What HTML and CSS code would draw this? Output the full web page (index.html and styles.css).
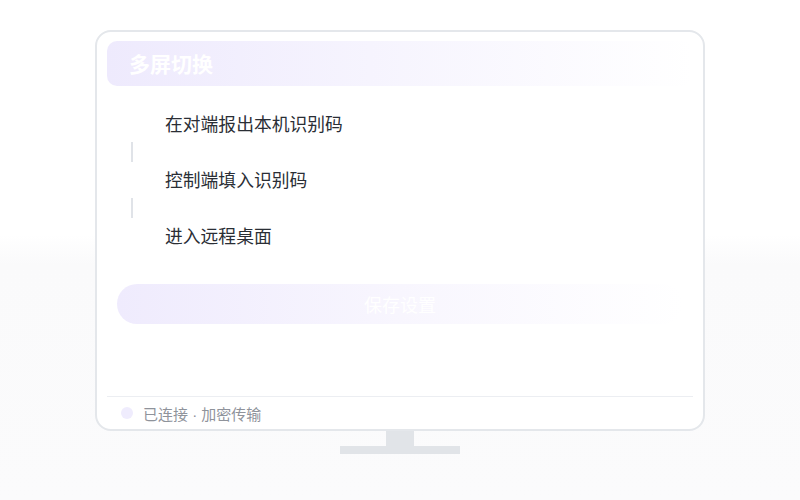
FILE: index.html
```html
<!DOCTYPE html>
<html lang="zh">
<head>
<meta charset="utf-8">
<title>多屏切换</title>
<link rel="stylesheet" href="styles.css">
</head>
<body>
<div class="stage">
  <div class="monitor">
    <div class="screen">
      <div class="header">
        <span class="title">多屏切换</span>
      </div>
      <ol class="steps">
        <li class="step"><span class="marker"></span><span class="label">在对端报出本机识别码</span></li>
        <li class="connector"></li>
        <li class="step"><span class="marker"></span><span class="label">控制端填入识别码</span></li>
        <li class="connector"></li>
        <li class="step"><span class="marker"></span><span class="label">进入远程桌面</span></li>
      </ol>
      <button class="save">保存设置</button>
      <div class="spacer"></div>
      <div class="footer">
        <span class="dot"></span>
        <span class="status">已连接 · 加密传输</span>
      </div>
    </div>
    <div class="neck"></div>
    <div class="base"></div>
  </div>
</div>
</body>
</html>
```
FILE: styles.css
```css
html, body {
  margin: 0;
  padding: 0;
}
body {
  width: 800px;
  height: 500px;
  overflow: hidden;
  background: linear-gradient(180deg, #ffffff 0%, #ffffff 47%, #fafafb 53%, #fbfbfc 100%);
  font-family: "Noto Sans CJK SC", "Noto Sans", sans-serif;
}
.stage {
  display: flex;
  justify-content: center;
  padding-top: 30px;
}
.monitor {
  display: flex;
  flex-direction: column;
  align-items: center;
}
.screen {
  box-sizing: border-box;
  width: 610px;
  height: 401px;
  border: 2px solid #e4e7eb;
  border-radius: 16px;
  background: #ffffff;
  padding: 9px 10px 0;
  display: flex;
  flex-direction: column;
}
.header {
  height: 45px;
  border-radius: 10px;
  background: linear-gradient(90deg, #eeeafd 0%, #f6f4fe 45%, rgba(255,255,255,0) 100%);
  display: flex;
  align-items: center;
  padding-left: 22px;
}
.title {
  color: #ffffff;
  font-size: 21px;
  font-weight: 700;
  line-height: 1;
}
.steps {
  list-style: none;
  margin: 20px 0 0;
  padding: 0 10px;
  display: flex;
  flex-direction: column;
}
.step {
  height: 36px;
  display: flex;
  align-items: center;
  gap: 18px;
}
.marker {
  width: 30px;
  height: 30px;
  border-radius: 50%;
  background: #ffffff;
  flex: none;
}
.label {
  font-size: 17.8px;
  color: #2a2e35;
  line-height: 1;
}
.connector {
  width: 2px;
  height: 20px;
  margin-left: 14px;
  background: #e0e3e8;
}
.save {
  margin: 30px 10px 0;
  height: 40px;
  border: none;
  border-radius: 20px;
  background: linear-gradient(90deg, #efebfd 0%, #f8f6fe 50%, rgba(255,255,255,0) 100%);
  color: #ffffff;
  font-family: inherit;
  font-size: 18px;
  padding: 0;
}
.spacer {
  flex: 1;
}
.footer {
  border-top: 1px solid #eceef2;
  height: 32px;
  display: flex;
  align-items: center;
  gap: 10px;
  padding-left: 14px;
}
.dot {
  width: 12px;
  height: 12px;
  border-radius: 50%;
  background: #efecfd;
  flex: none;
}
.status {
  font-family: "Liberation Sans", "Noto Sans CJK SC", sans-serif;
  font-size: 15px;
  color: #8f939b;
  line-height: 1;
  padding-top: 2px;
}
.neck {
  width: 28px;
  height: 15px;
  background: #e1e4e8;
}
.base {
  width: 120px;
  height: 8px;
  background: #e1e4e8;
}
```
